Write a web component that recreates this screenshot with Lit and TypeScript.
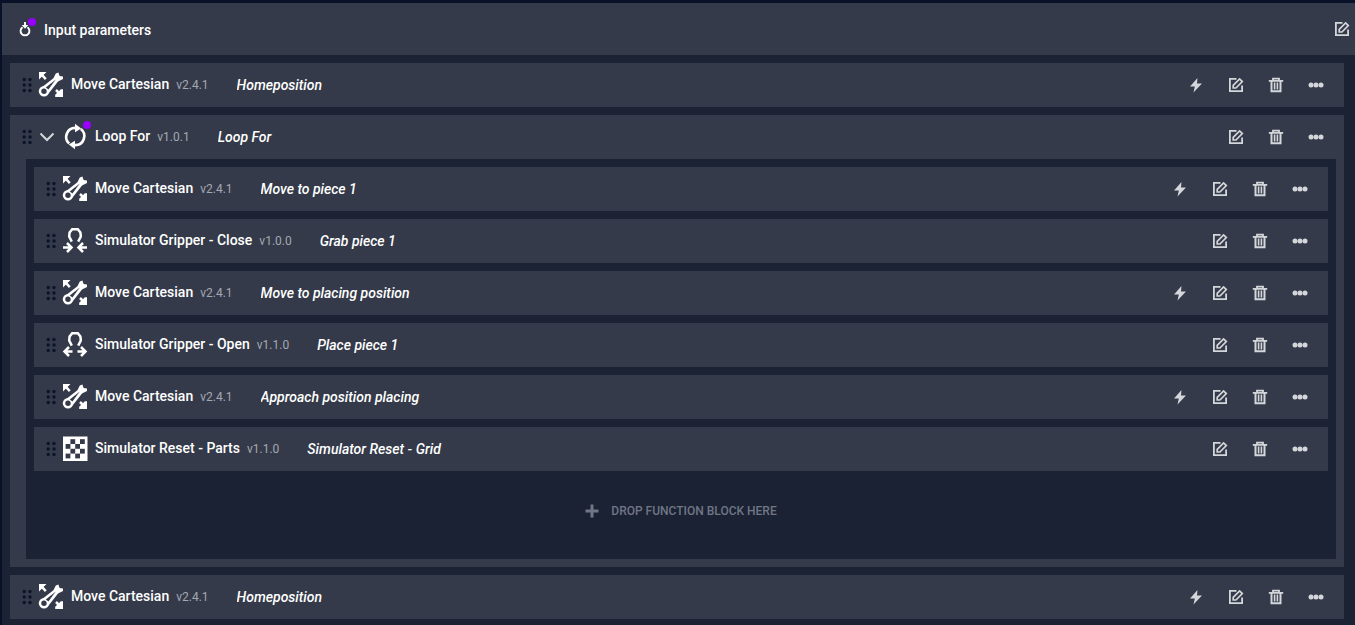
import { LitElement, html, css, svg, nothing } from "lit";
import { customElement, property } from "lit/decorators.js";

interface Block {
  icon: string;
  name: string;
  version: string;
  label: string;
  bolt?: boolean;
  children?: Block[];
}

const move = (label: string): Block => ({
  icon: "move", name: "Move Cartesian", version: "v2.4.1", label, bolt: true,
});

const program: Block[] = [
  move("Homeposition"),
  {
    icon: "loop", name: "Loop For", version: "v1.0.1", label: "Loop For",
    children: [
      move("Move to piece 1"),
      { icon: "close", name: "Simulator Gripper - Close", version: "v1.0.0", label: "Grab piece 1" },
      move("Move to placing position"),
      { icon: "open", name: "Simulator Gripper - Open", version: "v1.1.0", label: "Place piece 1" },
      move("Approach position placing"),
      { icon: "grid", name: "Simulator Reset - Parts", version: "v1.1.0", label: "Simulator Reset - Grid" },
    ],
  },
  move("Homeposition"),
];

const checks = [0, 1, 2, 3].flatMap((r) =>
  [0, 1, 2, 3].filter((c) => (r + c) % 2 === 1).map((c) => [c, r]));

const claw = svg`<path d="M10.800 14.600L8.200 9.600 8.600 5.500 11.200 2.200h5.600l2.600 3.300.400 4.100-2.600 5" fill="none" stroke="currentColor" stroke-width="2.500"/>`;

const blockIcons: Record<string, unknown> = {
  move: svg`<path d="M3 17.800L16.400 7.200 18.800 2.400 21.400 1.400 22.600 5l3.400.600V8l-5 2.600L11.600 22.600z" fill="currentColor"/>
    <circle cx="7" cy="20.200" r="5.200" fill="currentColor"/>
    <circle cx="7" cy="20.200" r="2.700" fill="#343a49"/>
    <path d="M8.800 16.600L18.800 8.400 11.400 18.600z" fill="#343a49"/>
    <path d="M5 4l3.800 4.200M19 19l4.500 4.500" stroke="currentColor" stroke-width="2.500"/>
    <path d="M2 1h7.500L2 8.500zM26 18.200V26h-7.800v-2.200l5.600-5.600z" fill="currentColor"/>`,
  loop: svg`<path d="M8.200 20.600A9 9 0 0 1 14.200 4.900M19.800 6A9 9 0 0 1 13.800 22.100" fill="none" stroke="currentColor" stroke-width="2.700"/>
    <path d="M14 .800l6.200 4.600-6.200 3.800zM14 26.200l-6.200-4.600 6.200-3.800z" fill="currentColor"/>`,
  close: svg`${claw}
    <path d="M2 20.500h7.500M6 16l4.500 4.500L6 25M26 20.500h-7.500M22 16l-4.500 4.500L22 25" fill="none" stroke="currentColor" stroke-width="2.500"/>`,
  open: svg`${claw}
    <path d="M4 20.500h7.500M8 16l-4.500 4.500L8 25M24 20.500h-7.500M20 16l4.500 4.500L20 25" fill="none" stroke="currentColor" stroke-width="2.500"/>`,
  grid: svg`<path d="M2 1.500h24.500V26H2z" fill="currentColor"/>
    ${checks.map(([c, r]) => svg`<rect x=${4.6 + c * 4.8} y=${4.2 + r * 4.8} width="4.800" height="4.800" fill="#343a49"/>`)}`,
};

const actionIcons: Record<string, unknown> = {
  bolt: svg`<path d="M9.500 1L2 9.500h4.800L5.500 15.500 14 6.500H9z" fill="currentColor"/>`,
  edit: svg`<path d="M8.500 1.900H1.900v12.200h12.200V8.500" fill="none" stroke="currentColor" stroke-width="1.800"/>
    <path d="M5.200 11V8.300L11.600 1.900l2.700 2.700L7.900 11z" fill="none" stroke="currentColor" stroke-width="1.700"/>`,
  trash: svg`<path d="M.800 3.900h14.400M5 3.500V1.600h6v1.900" fill="none" stroke="currentColor" stroke-width="1.800"/>
    <path d="M3.500 4v10.200h9V4" fill="none" stroke="currentColor" stroke-width="2"/>
    <path d="M6.600 5.500v7M9.400 5.500v7" stroke="currentColor" stroke-width="1.600"/>`,
  more: svg`<g fill="currentColor"><circle cx="3" cy="8" r="2.500"/><circle cx="8" cy="8" r="2.500"/><circle cx="13" cy="8" r="2.500"/></g>`,
};

const action = (name: string, label: string) => html`
  <button class="action" type="button" aria-label=${label}>
    <svg width="16" height="16" viewBox="0 0 16 16" aria-hidden="true">${actionIcons[name]}</svg>
  </button>`;

@customElement("function-block")
export class FunctionBlock extends LitElement {
  @property({ attribute: false }) block!: Block;

  static styles = css`
    :host { display: block; background: #343a49; }
    .row { display: flex; align-items: center; height: 44px; padding: 0 8px 0 9px; }
    .handle { width: 16px; height: 16px; color: #0b142a; cursor: grab; }
    button { display: grid; place-items: center; padding: 0; border: 0; background: none; color: inherit; cursor: pointer; }
    .toggle { width: 24px; height: 24px; color: #d4d6da; }
    .icon { position: relative; width: 28px; height: 28px; margin: 0 6px 0 2px; color: #fff; }
    .badge { position: absolute; top: -2px; right: -2px; width: 8px; height: 8px; border-radius: 50%; background: #9900ff; }
    svg { display: block; }
    .title { display: flex; align-items: baseline; gap: 7px; padding-bottom: 2px; white-space: nowrap; }
    .name { font-size: 14px; font-weight: 500; color: #fff; }
    .version { font-size: 12px; color: #a5a9b1; }
    .label { flex: 1; min-width: 0; margin-left: 28px; font-size: 14px; font-style: italic; font-weight: 500; color: #fff;
      white-space: nowrap; overflow: hidden; text-overflow: ellipsis; }
    .actions { display: flex; color: #d4d6da; }
    .action { width: 40px; height: 40px; }
    .body { display: flex; flex-direction: column; gap: 8px; margin: 0 8px 0 16px; padding: 8px; background: #1a2234; }
    .wrap { padding-bottom: 8px; }
    .drop { display: flex; align-items: center; justify-content: center; gap: 12px; padding: 20px 0 28px; line-height: 24px;
      font-size: 12px; font-weight: 500; color: #717684; }
  `;

  render() {
    const b = this.block;
    return html`
      <div class="row">
        <svg class="handle" viewBox="0 0 16 16" fill="currentColor" aria-hidden="true">
          ${[2.5, 8, 13.5].map((y) => [5.2, 11].map((x) => svg`<circle cx=${x} cy=${y} r="1.700"/>`))}
        </svg>
        ${b.children ? html`<button class="toggle" type="button" aria-label="Collapse" aria-expanded="true">
          <svg width="24" height="24" viewBox="0 0 24 24"><path d="M5.500 8.500l6.500 6.500 6.500-6.500" fill="none" stroke="currentColor" stroke-width="2"/></svg>
        </button>` : nothing}
        <div class="icon">
          <svg width="28" height="28" viewBox="0 0 28 28" aria-hidden="true">${blockIcons[b.icon]}</svg>
          ${b.children ? html`<span class="badge"></span>` : nothing}
        </div>
        <div class="title"><span class="name">${b.name}</span><span class="version">${b.version}</span></div>
        <div class="label">${b.label}</div>
        <div class="actions">
          ${b.bolt ? action("bolt", "Execute") : nothing}
          ${action("edit", "Edit")}${action("trash", "Delete")}${action("more", "More")}
        </div>
      </div>
      ${b.children ? html`<div class="wrap"><div class="body">
        ${b.children.map((c) => html`<function-block .block=${c}></function-block>`)}
        <div class="drop">
          <svg width="14" height="14" viewBox="0 0 14 14" aria-hidden="true"><path d="M7 .5v13M.5 7h13" stroke="currentColor" stroke-width="3"/></svg>
          <span>DROP FUNCTION BLOCK HERE</span>
        </div>
      </div></div>` : nothing}
    `;
  }
}

@customElement("app-root")
export class AppRoot extends LitElement {
  static styles = css`
    :host { display: block; min-height: 100vh; box-sizing: border-box; padding: 3px 0 0 2px; background: #071127;
      font-family: Roboto, "Liberation Sans", sans-serif; }
    .panel { background: #1a2234; padding-bottom: 6px; }
    .header { display: flex; align-items: center; height: 52px; padding: 0 5px 0 15px; background: #343a49; color: #fff; }
    .param { position: relative; width: 16px; height: 20px; margin-right: 11px; }
    .badge { position: absolute; top: -1px; right: -3px; width: 8px; height: 8px; border-radius: 50%; background: #9900ff; }
    .heading { flex: 1; margin: 0; padding-top: 2px; font-size: 14px; font-weight: 500; }
    svg { display: block; }
    .action { width: 16px; height: 20px; display: grid; place-items: center; padding: 0; border: 0; background: none; color: #d4d6da; cursor: pointer; }
    .list { display: flex; flex-direction: column; gap: 8px; padding: 8px 11px 0 8px; }
  `;

  render() {
    return html`
      <main class="panel">
        <header class="header">
          <div class="param">
            <svg width="16" height="20" viewBox="0 0 16 20" aria-hidden="true">
              <path d="M5.600 8.200a4.400 4.400 0 1 0 4.800 0M8 3v5" fill="none" stroke="currentColor" stroke-width="1.900"/>
              <path d="M4.800 6h6.400L8 9.800z" fill="currentColor"/>
            </svg>
            <span class="badge"></span>
          </div>
          <h1 class="heading">Input parameters</h1>
          ${action("edit", "Edit input parameters")}
        </header>
        <div class="list">
          ${program.map((b) => html`<function-block .block=${b}></function-block>`)}
        </div>
      </main>
    `;
  }
}
